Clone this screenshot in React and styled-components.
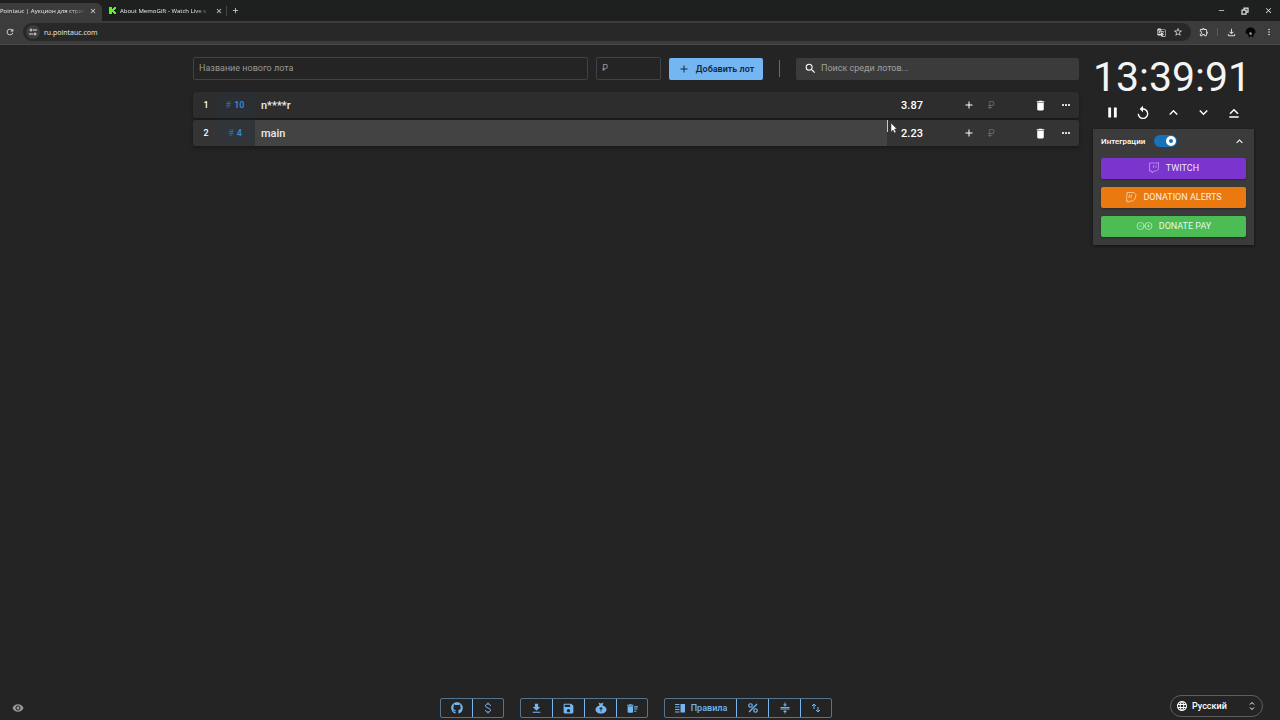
import React from "react";
import styled, { createGlobalStyle } from "styled-components";
import {
  MdAdd, MdClose, MdDelete, MdDeleteSweep, MdFileDownload, MdGTranslate,
  MdKeyboardArrowDown, MdKeyboardArrowUp, MdLanguage, MdMoreHoriz, MdMoreVert,
  MdOutlineExtension, MdOutlineFileDownload, MdPause, MdRefresh, MdRemove,
  MdReplay, MdSave, MdSearch, MdStarBorder, MdVisibility,
} from "react-icons/md";
import { FaGithub } from "react-icons/fa";
import { Twitch } from "lucide-react";

const GlobalStyle = createGlobalStyle`
  *, *::before, *::after { box-sizing: border-box; }
  html, body { margin: 0; background: #242424; }
  body, button, input, select {
    font-family: Roboto, "Liberation Sans", sans-serif;
    color: #fff;
  }
  button { background: none; border: 0; padding: 0; cursor: pointer; }
  svg { display: block; flex: none; }
`;

const Screen = styled.div`
  min-height: 100vh;
  display: flex;
  flex-direction: column;
  overflow: hidden;
`;

/* Browser chrome */
const Chrome = styled.header`
  font-family: "Open Sans", sans-serif;
  font-size: 6px;
  color: #ececec;
  background: #1e201f;
  button { color: #e0e0e0; }
`;

const TabStrip = styled.div`
  height: 21px;
  display: flex;
  align-items: center;
`;

const Tab = styled.div`
  display: flex;
  align-items: center;
  gap: 4px;
  height: 18px;
  align-self: flex-end;
  padding-bottom: 3px;
  width: ${(p) => (p.$active ? 102 : 121)}px;
  padding-left: ${(p) => (p.$active ? 0 : 7)}px;
  background: ${(p) => (p.$active ? "#3c3c3c" : "transparent")};
  border-radius: 0 6px 0 0;
`;

const TabTitle = styled.span`
  flex: none;
  width: ${(p) => (p.$wide ? 91 : 85)}px;
  white-space: nowrap;
  mask-image: linear-gradient(90deg, #000 82%, transparent);
`;

const TabDivider = styled.span`
  width: 1px;
  height: 10px;
  margin: 0 4px 0 3px;
  background: #454746;
`;

const WindowButtons = styled.div`
  display: flex;
  gap: 15px;
  margin-left: auto;
  padding-right: 7px;
`;

const Toolbar = styled.div`
  height: 24px;
  display: flex;
  align-items: center;
  gap: 8px;
  padding: 0 6px 1px 5px;
  background: #3c3c3c;
  border-bottom: 1px solid #484848;
`;

const Address = styled.div`
  flex: 1;
  height: 18px;
  display: flex;
  align-items: center;
  gap: 4px;
  padding: 0 8px 0 3px;
  border-radius: 9px;
  background: #282828;
`;

const SiteInfo = styled.button`
  width: 14px;
  height: 14px;
  border-radius: 7px;
  background: #3c3c3c;
  display: grid;
  place-items: center;
`;

const Url = styled.span`
  flex: 1;
  font-size: 7px;
`;

const AddressActions = styled.div`
  display: flex;
  align-items: center;
  gap: 7px;
`;

const ToolbarDivider = styled.span`
  width: 1px;
  height: 8px;
  background: #5a5a5a;
`;

/* Page */
const Main = styled.main`
  flex: 1;
  display: grid;
  grid-template-columns: minmax(0, 1fr) 161px;
  gap: 14px;
  align-content: start;
  padding: 12px 26px 0 193px;
`;

const Content = styled.section`
  display: flex;
  flex-direction: column;
  gap: 12px;
`;

const LotForm = styled.form`
  display: flex;
  align-items: center;
  gap: 8px;
  height: 23px;
`;

const Field = styled.input`
  height: 23px;
  min-width: 0;
  padding: 0 5px 1px;
  font-size: 9px;
  background: #242424;
  border: 1px solid #424242;
  border-radius: 2px;
  flex: ${(p) => (p.$narrow ? "0 0 65px" : "1")};
  &::placeholder { color: #999; opacity: 1; }
`;

const AddButton = styled.button`
  flex: 0 0 94px;
  height: 22px;
  display: flex;
  align-items: center;
  justify-content: center;
  gap: 6px;
  background: #74b6f2;
  color: #14283c;
  font-size: 9px;
  font-weight: 600;
  border-radius: 2px;
`;

const FormDivider = styled.span`
  width: 1px;
  height: 17px;
  margin: 0 8px;
  background: #6b6b6b;
`;

const Search = styled.label`
  flex: 0 0 283px;
  height: 22px;
  display: flex;
  align-items: center;
  gap: 4px;
  padding-left: 8px;
  background: #3b3b3b;
  border-radius: 2px;
  input {
    flex: 1;
    min-width: 0;
    padding: 0 0 1px;
    border: 0;
    background: none;
    font-size: 9px;
  }
  input::placeholder { color: #a0a0a0; opacity: 1; }
`;

const LotList = styled.ol`
  list-style: none;
  margin: 0;
  padding: 0;
  display: flex;
  flex-direction: column;
  gap: 2px;
`;

const Lot = styled.li`
  height: 26px;
  display: grid;
  grid-template-columns: 22px 40px minmax(0, 1fr) 192px;
  align-items: center;
  border-radius: 3px;
  background: ${(p) => (p.$active ? "#343434" : "#2d2d2d")};
  box-shadow: 0 2px 4px rgba(0, 0, 0, 0.3);
`;

const Rank = styled.span`
  padding-left: 4px;
  text-align: center;
  font-size: 9px;
  font-weight: 500;
`;

const LotId = styled.span`
  display: flex;
  align-items: center;
  justify-content: center;
  gap: 3px;
  height: 100%;
  background: ${(p) => (p.$active ? "#31353a" : "#2b2e32")};
  color: #2f8fdc;
  font-size: 9px;
  font-weight: 600;
  i { font-style: normal; font-weight: 400; color: #2870a6; }
`;

const LotName = styled.span`
  height: 100%;
  display: flex;
  align-items: center;
  padding-left: 6px;
  font-size: 11px;
  font-weight: 500;
  color: #ececec;
  background: ${(p) => (p.$active ? "#434343" : "transparent")};
`;

const LotControls = styled.div`
  display: grid;
  grid-template-columns: 50px 38px 46px 38px 14px;
  align-items: center;
  justify-items: center;
`;

const Cost = styled.span`
  font-size: 11px;
  font-weight: 500;
`;

const IconButton = styled.button`
  display: grid;
  place-items: center;
  justify-self: ${(p) => p.$align || "auto"};
`;

const Currency = styled.span`
  justify-self: start;
  padding-left: 13px;
  font-size: 10px;
  color: #656565;
`;

const Aside = styled.aside`
  display: flex;
  flex-direction: column;
`;

const Timer = styled.div`
  height: 40px;
  line-height: 40px;
  font-size: 41px;
  text-align: center;
  white-space: nowrap;
  padding-right: 4px;
  color: #f4f4f4;
`;

const TimerControls = styled.div`
  display: flex;
  justify-content: space-between;
  align-items: center;
  height: 32px;
  padding: 0 12px 1px 11px;
`;

const Panel = styled.section`
  padding: 0 8px 8px;
  display: flex;
  flex-direction: column;
  gap: 8px;
  background: #3b3b3b;
  box-shadow: 0 1px 3px rgba(0, 0, 0, 0.5);
`;

const PanelHeader = styled.div`
  height: 24px;
  margin-bottom: -3px;
  display: flex;
  align-items: center;
  gap: 9px;
  font-size: 8px;
  font-weight: 500;
  button { margin-left: auto; }
`;

const Switch = styled.input`
  appearance: none;
  position: relative;
  width: 23px;
  height: 12px;
  margin: 0;
  border-radius: 6px;
  background: #1971b8;
  &::after {
    content: "";
    position: absolute;
    top: 1px;
    right: 1px;
    width: 10px;
    height: 10px;
    border: 3px solid #fff;
    border-radius: 5px;
    background: #1971b8;
  }
`;

const ServiceButton = styled.button`
  height: 21px;
  padding-bottom: 1px;
  display: flex;
  align-items: center;
  justify-content: center;
  gap: 6px;
  border-radius: 2px;
  background: ${(p) => p.$color};
  color: rgba(255, 255, 255, 0.9);
  font-size: 9px;
  box-shadow: 0 1px 2px rgba(0, 0, 0, 0.3);
  svg { opacity: 0.6; }
`;

const Footer = styled.footer`
  display: grid;
  grid-template-columns: 1fr auto 1fr;
  align-items: end;
  padding: 0 17px 2px 12px;
`;

const VisibilityButton = styled.button`
  justify-self: start;
  padding-bottom: 4px;
  color: #9a9a9a;
`;

const ToolGroups = styled.div`
  display: flex;
  gap: 16px;
  padding-right: 3px;
`;

const ToolGroup = styled.div`
  display: flex;
  height: 20px;
  border: 1px solid #54748e;
  border-radius: 2px;
`;

const ToolButton = styled.button`
  width: ${(p) => (p.$wide ? 71 : 32)}px;
  display: flex;
  align-items: center;
  justify-content: center;
  gap: 5px;
  color: #74b6f2;
  font-size: 9px;
  font-weight: 500;
  & + & { border-left: 1px solid #74b6f2; }
  &:last-child { width: 31px; }
  &:first-child { width: ${(p) => (p.$wide ? 71 : 31)}px; }
`;

const Language = styled.label`
  justify-self: end;
  width: 93px;
  height: 22px;
  margin-bottom: 1px;
  display: flex;
  align-items: center;
  gap: 4px;
  padding: 0 6px 0 5px;
  border: 1px solid #5e5e5e;
  border-radius: 11px;
  select {
    appearance: none;
    flex: 1;
    min-width: 0;
    border: 0;
    padding: 0;
    background: none;
    font-size: 9px;
    font-weight: 500;
  }
`;

/* Mouse pointer hovering over the highlighted lot */
const Pointer = styled.svg`
  position: absolute;
  top: 120px;
  left: 886px;
  pointer-events: none;
`;

const stroke = { fill: "none", stroke: "currentColor", strokeWidth: 2 };

const KickLogo = () => (
  <svg width="7" height="7" viewBox="0 0 7 7" fill="#53fc18">
    <path d="M0 0h3v2h1V1h1V0h2v2H6v1H5v1h1v1h1v2H5V6H4V5H3v2H0z" />
  </svg>
);

const TuneIcon = () => (
  <svg width="8" height="8" viewBox="0 0 16 16" {...stroke}>
    <circle cx="4" cy="4" r="2" /><path d="M8 4h8M0 12h8" /><circle cx="12" cy="12" r="2" />
  </svg>
);

const RestoreIcon = () => (
  <svg width="8" height="8" viewBox="0 0 16 16" {...stroke} strokeWidth="2.5">
    <path d="M2 6h8v8H2zM6 5V2h8v8h-3" />
  </svg>
);

const Avatar = () => (
  <svg width="11" height="11" viewBox="0 0 22 22">
    <path d="M1 12C1 4 6 1 11 1s10 3 10 10l-3 3-2 7-4-3-4 3-2-6z" fill="#060606" />
    <path d="M8 12l3-2 3 2-1 4h-3z" fill="#8c8c8c" />
  </svg>
);

const ResetUpIcon = () => (
  <svg width="16" height="16" viewBox="0 0 24 24" {...stroke} strokeWidth="2.2">
    <path d="M6 13l6-6 6 6M5 18h14" />
  </svg>
);

const DonationAlertsIcon = () => (
  <svg width="12" height="12" viewBox="0 0 24 24" {...stroke}>
    <path d="M4 3h14l4 4-2 9-5 4H9l-3 3v-3H3zM13 7l-1 7M9 7l-1 7" />
  </svg>
);

const DonatePayIcon = () => (
  <svg width="17" height="10" viewBox="0 0 34 20" {...stroke}>
    <circle cx="9" cy="10" r="7" /><circle cx="25" cy="10" r="7" />
    <path d="M6 10h6M22 10h6M25 7v6M14 15l6-10" />
  </svg>
);

const DollarIcon = () => (
  <svg width="12" height="12" viewBox="0 0 24 24" {...stroke}>
    <path d="M17 8c0-3-2-4-5-4S7 5 7 8c0 5 10 3 10 8 0 3-2 4-5 4s-5-1-5-4M12 1v3M12 20v3" />
  </svg>
);

const MoneyBagIcon = () => (
  <svg width="12" height="12" viewBox="0 0 24 24" fill="currentColor">
    <path fillRule="evenodd" d="M7 1l5 2 5-2-2 6c4 1 8 4 8 8 0 5-5 8-11 8S1 20 1 15c0-4 4-7 8-8zM11 10v2H9v2h2v5h2v-5h2v-2h-2v-2z" />
  </svg>
);

const RulesIcon = () => (
  <svg width="12" height="12" viewBox="0 0 24 24" fill="currentColor">
    <path d="M2 4h9v2H2zm0 5h9v2H2zm0 5h9v2H2zm0 5h9v2H2zM13 4h9v17h-9z" />
  </svg>
);

const PercentIcon = () => (
  <svg width="12" height="12" viewBox="0 0 24 24" {...stroke} strokeWidth="2.4">
    <circle cx="7" cy="7" r="3.5" /><circle cx="17" cy="17" r="3.5" /><path d="M20 4L4 20" />
  </svg>
);

const CompressIcon = () => (
  <svg width="12" height="12" viewBox="0 0 24 24" fill="currentColor">
    <path d="M11 1h2v4h3l-4 4-4-4h3zM3 10h18v2H3zm0 3h18v2H3zm5 7l4-4 4 4h-3v3h-2v-3z" />
  </svg>
);

const SwapIcon = () => (
  <svg width="12" height="12" viewBox="0 0 24 24" {...stroke}>
    <path d="M8 14V4M4 8l4-4 4 4M16 10v10M12 16l4 4 4-4" />
  </svg>
);

const SelectorIcon = () => (
  <svg width="8" height="10" viewBox="0 0 16 20" {...stroke}>
    <path d="M4 7l4-4 4 4M4 13l4 4 4-4" />
  </svg>
);

const lots = [
  { id: 10, name: "n****r", cost: "3.87" },
  { id: 4, name: "main", cost: "2.23", active: true },
];

const services = [
  { label: "TWITCH", color: "#7c34cf", icon: <Twitch size={12} strokeWidth={1.5} /> },
  { label: "DONATION ALERTS", color: "#ea7a10", icon: <DonationAlertsIcon /> },
  { label: "DONATE PAY", color: "#4bbd54", icon: <DonatePayIcon /> },
];

const toolGroups = [
  [
    { label: "GitHub", icon: <FaGithub size={12} /> },
    { label: "Поддержать", icon: <DollarIcon /> },
  ],
  [
    { label: "Загрузить", icon: <MdFileDownload size={13} /> },
    { label: "Сохранить", icon: <MdSave size={13} /> },
    { label: "Ставки", icon: <MoneyBagIcon /> },
    { label: "Очистить", icon: <MdDeleteSweep size={13} /> },
  ],
  [
    { label: "Правила", icon: <RulesIcon />, wide: true },
    { label: "Проценты", icon: <PercentIcon /> },
    { label: "Сжать", icon: <CompressIcon /> },
    { label: "Сортировка", icon: <SwapIcon /> },
  ],
];

export default function App() {
  return (
    <Screen>
      <GlobalStyle />
      <Chrome>
        <TabStrip>
          <Tab $active>
            <TabTitle>Pointauc | Аукцион для стрим</TabTitle>
            <IconButton aria-label="Закрыть вкладку"><MdClose size={8} /></IconButton>
          </Tab>
          <Tab>
            <KickLogo />
            <TabTitle $wide>About MemoGift - Watch Live s</TabTitle>
            <IconButton aria-label="Закрыть вкладку"><MdClose size={8} /></IconButton>
          </Tab>
          <TabDivider />
          <IconButton aria-label="Новая вкладка"><MdAdd size={9} /></IconButton>
          <WindowButtons>
            <IconButton aria-label="Свернуть"><MdRemove size={9} /></IconButton>
            <IconButton aria-label="Восстановить"><RestoreIcon /></IconButton>
            <IconButton aria-label="Закрыть"><MdClose size={9} /></IconButton>
          </WindowButtons>
        </TabStrip>
        <Toolbar>
          <IconButton aria-label="Обновить"><MdRefresh size={10} /></IconButton>
          <Address>
            <SiteInfo aria-label="Сведения о сайте"><TuneIcon /></SiteInfo>
            <Url>ru.pointauc.com</Url>
            <AddressActions>
              <IconButton aria-label="Перевести"><MdGTranslate size={9} /></IconButton>
              <IconButton aria-label="В закладки"><MdStarBorder size={10} /></IconButton>
            </AddressActions>
          </Address>
          <IconButton aria-label="Расширения"><MdOutlineExtension size={10} /></IconButton>
          <ToolbarDivider />
          <IconButton aria-label="Загрузки"><MdOutlineFileDownload size={11} /></IconButton>
          <IconButton aria-label="Профиль"><Avatar /></IconButton>
          <IconButton aria-label="Меню"><MdMoreVert size={10} /></IconButton>
        </Toolbar>
      </Chrome>

      <Main>
        <Content>
          <LotForm onSubmit={(e) => e.preventDefault()}>
            <Field aria-label="Название нового лота" placeholder="Название нового лота" />
            <Field $narrow aria-label="Стоимость" placeholder="₽" />
            <AddButton type="submit"><MdAdd size={12} />Добавить лот</AddButton>
            <FormDivider />
            <Search>
              <MdSearch size={13} />
              <input aria-label="Поиск среди лотов" placeholder="Поиск среди лотов..." />
            </Search>
          </LotForm>
          <LotList>
            {lots.map((lot, i) => (
              <Lot key={lot.id} $active={lot.active}>
                <Rank>{i + 1}</Rank>
                <LotId $active={lot.active}><i>#</i>{lot.id}</LotId>
                <LotName $active={lot.active}>{lot.name}</LotName>
                <LotControls>
                  <Cost>{lot.cost}</Cost>
                  <IconButton $align="end" aria-label="Прибавить"><MdAdd size={12} /></IconButton>
                  <Currency>₽</Currency>
                  <IconButton aria-label="Удалить"><MdDelete size={13} /></IconButton>
                  <IconButton aria-label="Ещё"><MdMoreHoriz size={12} /></IconButton>
                </LotControls>
              </Lot>
            ))}
          </LotList>
        </Content>

        <Aside>
          <Timer>13:39:91</Timer>
          <TimerControls>
            <IconButton aria-label="Пауза"><MdPause size={17} /></IconButton>
            <IconButton aria-label="Сбросить"><MdReplay size={16} /></IconButton>
            <IconButton aria-label="Больше"><MdKeyboardArrowUp size={17} /></IconButton>
            <IconButton aria-label="Меньше"><MdKeyboardArrowDown size={17} /></IconButton>
            <IconButton aria-label="Вверх"><ResetUpIcon /></IconButton>
          </TimerControls>
          <Panel>
            <PanelHeader>
              <label htmlFor="integrations">Интеграции</label>
              <Switch id="integrations" type="checkbox" role="switch" defaultChecked />
              <IconButton aria-label="Свернуть"><MdKeyboardArrowUp size={13} /></IconButton>
            </PanelHeader>
            {services.map((s) => (
              <ServiceButton key={s.label} $color={s.color}>{s.icon}{s.label}</ServiceButton>
            ))}
          </Panel>
        </Aside>
      </Main>

      <Footer>
        <VisibilityButton aria-label="Показать"><MdVisibility size={12} /></VisibilityButton>
        <ToolGroups>
          {toolGroups.map((group) => (
            <ToolGroup key={group[0].label}>
              {group.map((t) => (
                <ToolButton key={t.label} $wide={t.wide} aria-label={t.label}>
                  {t.icon}{t.wide && t.label}
                </ToolButton>
              ))}
            </ToolGroup>
          ))}
        </ToolGroups>
        <Language>
          <MdLanguage size={12} />
          <select aria-label="Язык"><option>Русский</option></select>
          <SelectorIcon />
        </Language>
      </Footer>

      <Pointer width="12" height="14" viewBox="0 0 12 14">
        <path d="M1.5 0v12" stroke="#c8c8c8" />
        <path d="M5 3v9l2-2 1.500 3 1.500-1-1.500-3H11z" fill="#fff" stroke="#333" strokeWidth="0.5" />
      </Pointer>
    </Screen>
  );
}
